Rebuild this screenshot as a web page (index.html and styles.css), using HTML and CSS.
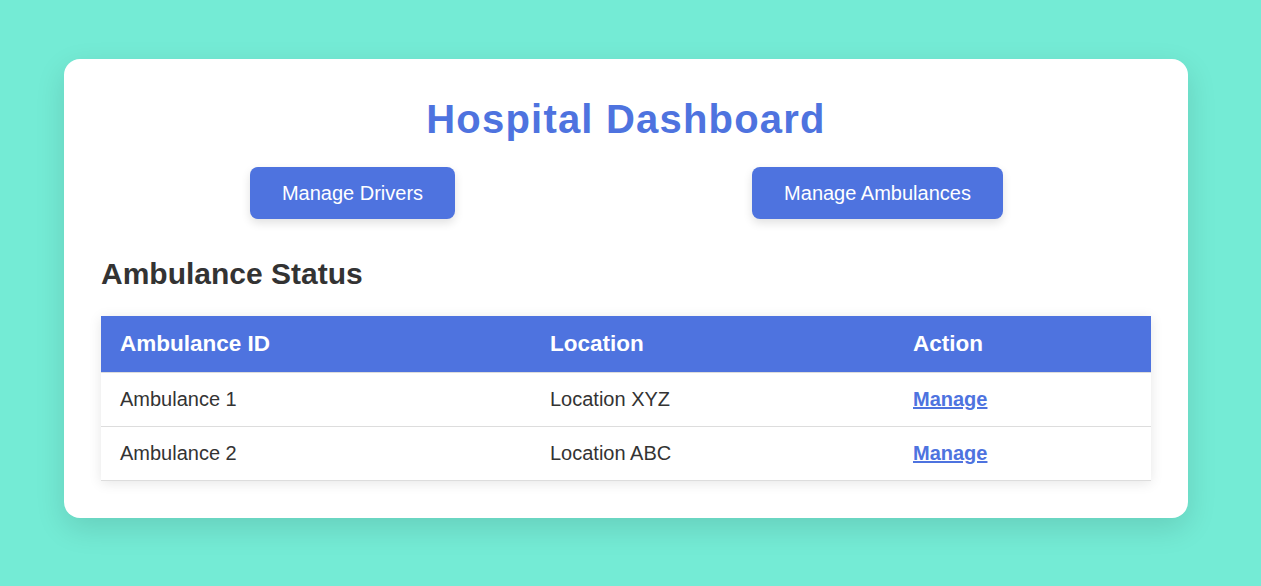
FILE: index.html
```html
<!DOCTYPE html>
<html lang="en">
<head>
<meta charset="utf-8">
<title>Hospital Dashboard</title>
<link rel="stylesheet" href="styles.css">
</head>
<body>
<main class="card">
  <h1 class="title">Hospital Dashboard</h1>
  <div class="actions">
    <div class="action-cell"><button class="btn">Manage Drivers</button></div>
    <div class="action-cell"><button class="btn">Manage Ambulances</button></div>
  </div>
  <h2 class="section-title">Ambulance Status</h2>
  <table class="status-table">
    <colgroup>
      <col class="col-id">
      <col class="col-loc">
      <col class="col-act">
    </colgroup>
    <thead>
      <tr><th>Ambulance ID</th><th>Location</th><th>Action</th></tr>
    </thead>
    <tbody>
      <tr><td>Ambulance 1</td><td>Location XYZ</td><td><a href="#" class="manage">Manage</a></td></tr>
      <tr><td>Ambulance 2</td><td>Location ABC</td><td><a href="#" class="manage">Manage</a></td></tr>
    </tbody>
  </table>
</main>
</body>
</html>
```

FILE: styles.css
```css
html, body {
  margin: 0;
  padding: 0;
}
body {
  background: #74ebd5;
  font-family: "Liberation Sans", Arial, sans-serif;
  min-height: 586px;
  padding: 59px 0 0 64px;
  box-sizing: border-box;
}
.card {
  width: 1124px;
  box-sizing: border-box;
  background: #fff;
  border-radius: 16px;
  padding: 37px 37px 37px;
  box-shadow: 0 10px 30px rgba(0, 0, 0, 0.12);
}
.title {
  margin: 0;
  text-align: center;
  color: #4e73df;
  font-size: 40px;
  font-weight: bold;
  letter-spacing: 1.2px;
  line-height: 46px;
}
.actions {
  display: grid;
  grid-template-columns: 1fr 1fr;
  justify-items: center;
  margin: 25px 11px 0 -11px;
}
.btn {
  font-family: "Liberation Sans", Arial, sans-serif;
  font-size: 20px;
  line-height: 22px;
  color: #fff;
  background: #4e73df;
  border: none;
  border-radius: 8px;
  padding: 15px 32px;
  box-shadow: 0 4px 10px rgba(0, 0, 0, 0.12);
  cursor: pointer;
}
.section-title {
  margin: 37px 0 25px;
  font-size: 30px;
  line-height: 35px;
  font-weight: bold;
  color: #333;
}
.status-table {
  width: 1050px;
  border-collapse: collapse;
  box-shadow: 0 2px 12px rgba(0, 0, 0, 0.1);
}
.col-id { width: 430px; }
.col-loc { width: 363px; }
.col-act { width: 257px; }
.status-table th {
  background: #4e73df;
  color: #fff;
  text-align: left;
  font-size: 22.5px;
  line-height: 26px;
  padding: 15px 19px 15px;
  font-weight: bold;
  border-bottom: 1px solid #ddd;
}
.status-table td {
  font-size: 20px;
  line-height: 23px;
  color: #333;
  padding: 15px 19px;
  border-bottom: 1px solid #ddd;
}
.manage {
  color: #4e73df;
  font-weight: bold;
  text-decoration: underline;
}
```
